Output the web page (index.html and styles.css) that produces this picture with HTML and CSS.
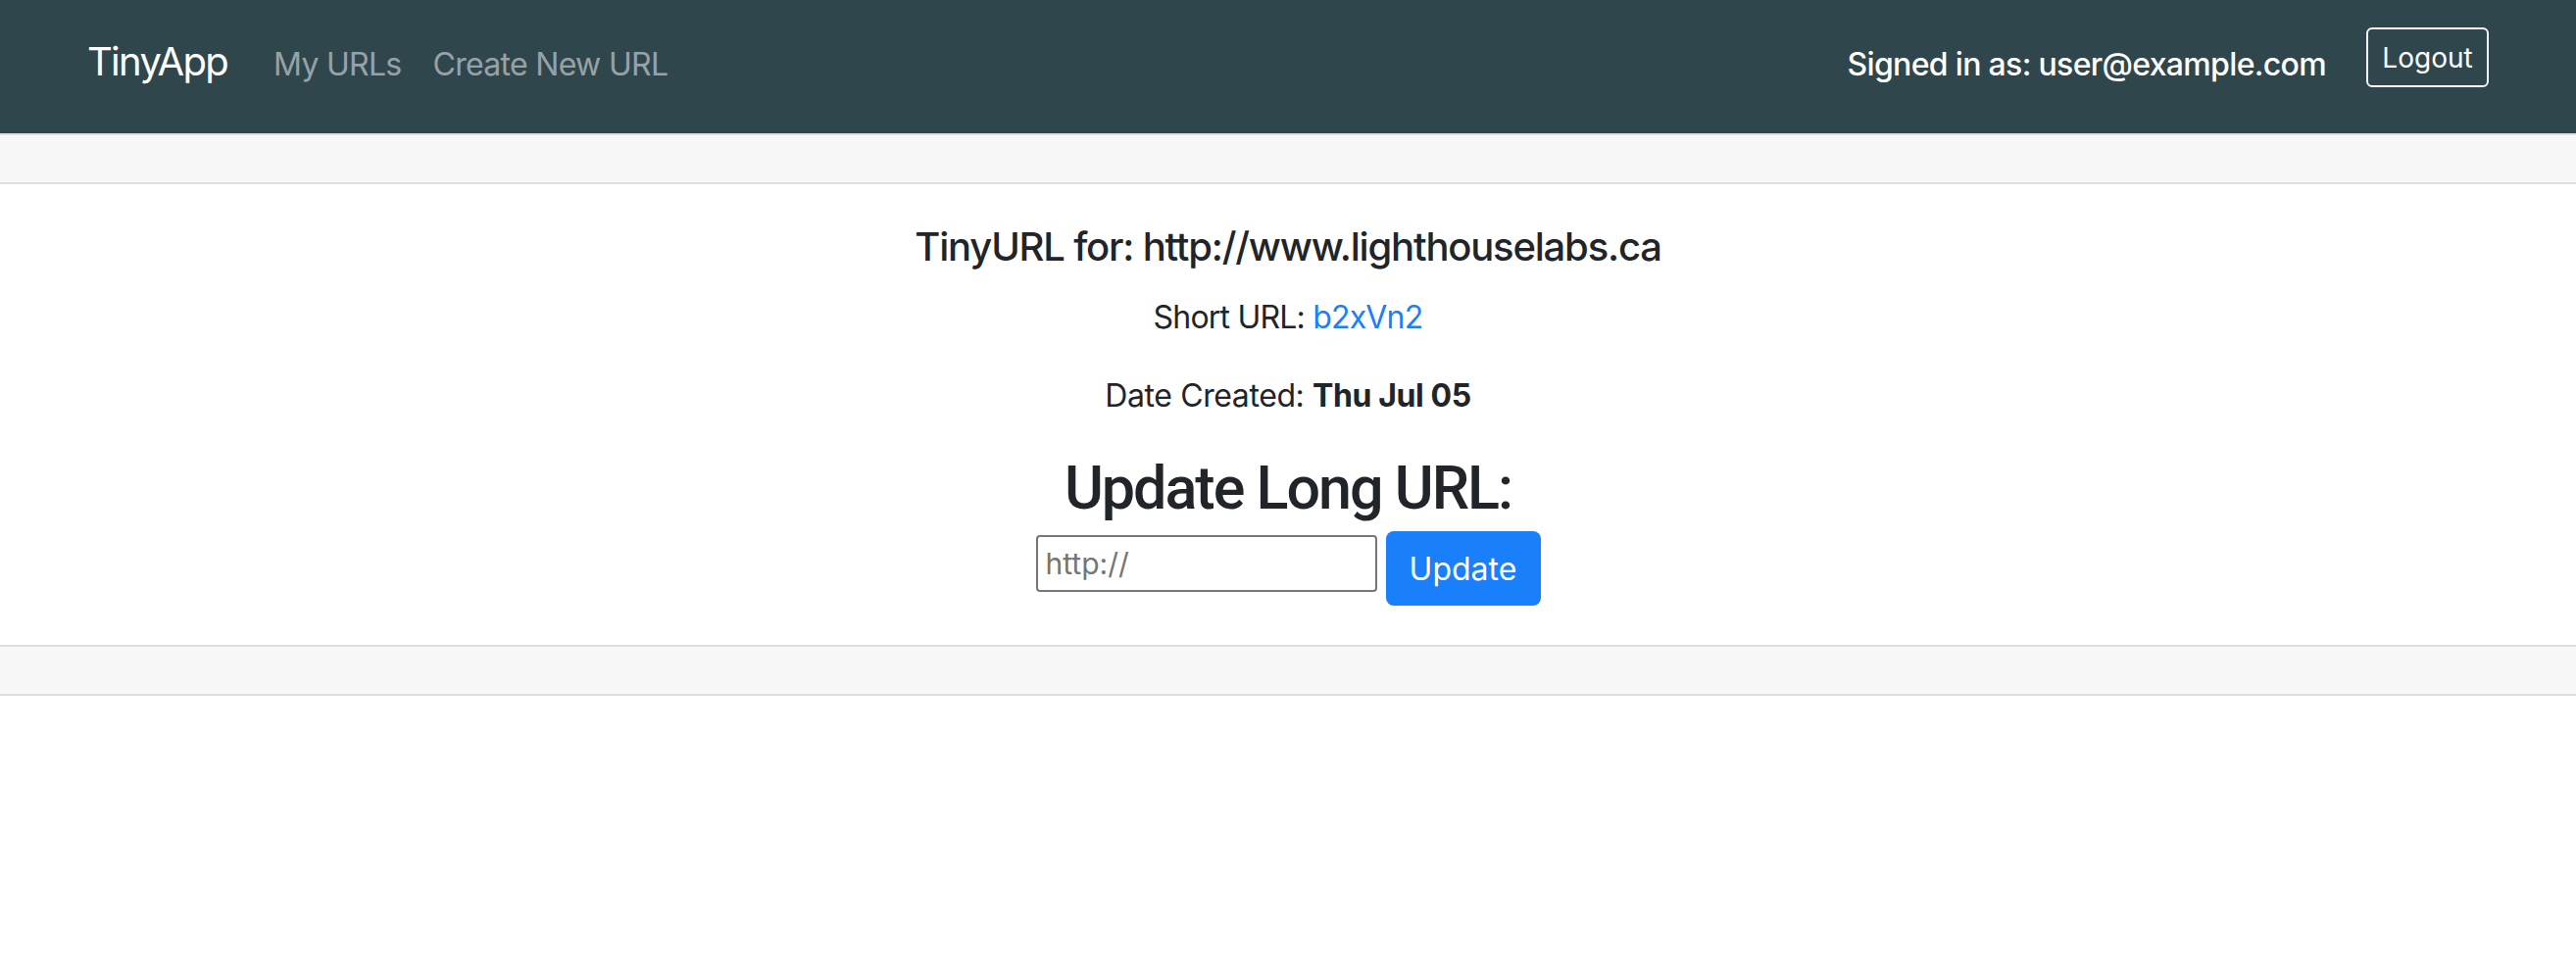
FILE: index.html
```html
<!DOCTYPE html>
<html lang="en">
<head>
<meta charset="utf-8">
<title>TinyApp</title>
<link rel="stylesheet" href="styles.css">
</head>
<body>
<nav class="navbar">
  <a class="brand" href="#">TinyApp</a>
  <a class="nav-link" href="#">My URLs</a>
  <a class="nav-link" href="#">Create New URL</a>
  <span class="spacer"></span>
  <span class="signed">Signed in as: user@example.com</span>
  <button class="btn-logout" type="button">Logout</button>
</nav>
<main class="card">
  <div class="card-header"></div>
  <div class="card-body">
    <h5 class="card-title">TinyURL for: http://www.lighthouselabs.ca</h5>
    <p class="card-text short-line">Short URL: <a class="short" href="#">b2xVn2</a></p>
    <p class="card-text date-line">Date Created: <strong>Thu Jul 05</strong></p>
    <h2 class="update-title">Update Long URL:</h2>
    <form class="update-form">
      <input class="url-input" type="text" placeholder="http://">
      <button class="btn-update" type="button">Update</button>
    </form>
  </div>
  <div class="card-footer"></div>
</main>
</body>
</html>
```
FILE: styles.css
```css
* { box-sizing: border-box; }
html, body { margin: 0; padding: 0; background: #fff; }
body {
  font-family: Inter, "Liberation Sans", sans-serif;
  color: #212529;
  font-size: 32px;
  line-height: 1.5;
}
.navbar {
  height: 136px;
  background: #2f464d;
  display: flex;
  align-items: baseline;
  padding: 33px 89px 0 89px;
}
.brand {
  color: #fff;
  text-decoration: none;
  font-size: 40px;
  line-height: 60px;
  letter-spacing: -1.7px;
  margin-right: 31px;
}
.nav-link {
  color: rgba(255,255,255,.5);
  text-decoration: none;
  font-size: 32px;
  line-height: 48px;
  letter-spacing: -0.7px;
  padding: 0 16px;
}
.spacer { flex: 1; }
.signed {
  color: #fff;
  font-size: 32px;
  font-weight: 500;
  line-height: 48px;
  letter-spacing: -0.67px;
  margin-right: 41px;
}
.btn-logout {
  align-self: flex-start;
  margin-top: -5px;
  height: 61px;
  width: 125px;
  font-family: inherit;
  font-size: 28px;
  line-height: 42px;
  color: #fff;
  background: transparent;
  border: 2px solid #f8f9fa;
  border-radius: 6px;
  padding: 0;
}
.card {
  display: block;
  border-top: 2px solid #dfdfdf;
  border-bottom: 2px solid #dfdfdf;
  text-align: center;
}
.card-header {
  height: 50px;
  background: #f7f7f7;
  border-bottom: 2px solid #dfdfdf;
}
.card-body { padding: 40px; }
.card-title {
  margin: 0 0 24px;
  font-size: 40px;
  font-weight: 500;
  line-height: 48px;
  letter-spacing: -1.2px;
}
.card-text {
  margin: 0 0 32px;
  line-height: 48px;
}
.short-line { letter-spacing: -0.8px; }
.date-line { letter-spacing: -0.4px; }
.short { color: #1a7ffb; text-decoration: none; }
.card-text strong { font-weight: 700; }
.update-title {
  margin: 0 0 5px;
  font-family: Roboto, Inter, sans-serif;
  font-size: 61px;
  font-weight: 500;
  line-height: 77px;
  letter-spacing: -2px;
}
.update-form {
  display: flex;
  justify-content: center;
  align-items: flex-start;
  gap: 9px;
}
.url-input {
  margin-top: 4px;
  width: 348px;
  height: 58px;
  border: 2px solid #767676;
  border-radius: 4px;
  padding: 0 8px;
  font-family: inherit;
  font-size: 30px;
  color: #212529;
}
.url-input::placeholder { color: #757575; }
.btn-update {
  width: 158px;
  height: 76px;
  background: #1a7ffb;
  color: #fff;
  border: 0;
  border-radius: 8px;
  font-family: inherit;
  font-size: 32px;
  padding: 0;
}
.card-footer {
  height: 50px;
  background: #f7f7f7;
  border-top: 2px solid #dfdfdf;
}
```
